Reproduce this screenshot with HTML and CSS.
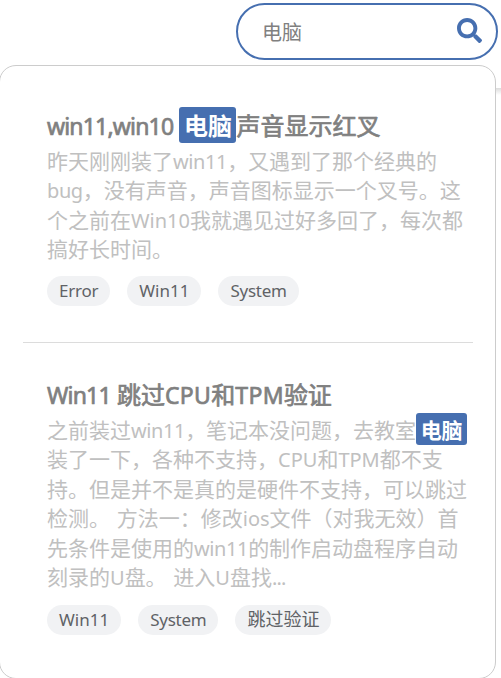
FILE: index.html
```html
<!DOCTYPE html>
<html lang="zh-CN">
<head>
<meta charset="utf-8">
<title>搜索</title>
<link rel="stylesheet" href="styles.css">
</head>
<body>
<header class="search-bar">
  <label class="search">
    <span class="query">电脑</span>
    <svg class="search-icon" viewBox="0 0 512 512" aria-hidden="true"><path fill="currentColor" d="M505 442.700 405.300 343c-4.500-4.500-10.600-7-17-7H372c27.600-35.300 44-79.700 44-128C416 93.100 322.900 0 208 0S0 93.100 0 208s93.100 208 208 208c48.300 0 92.700-16.400 128-44v16.300c0 6.400 2.500 12.500 7 17l99.700 99.700c9.400 9.400 24.600 9.400 33.900 0l28.300-28.300c9.400-9.400 9.400-24.600.1-34zM208 336c-70.700 0-128-57.200-128-128 0-70.700 57.200-128 128-128 70.700 0 128 57.200 128 128 0 70.700-57.200 128-128 128z"/></svg>
  </label>
  <div class="page-edge"></div>
</header>
<main class="results">
  <article class="result">
    <h2><span class="latin">win11,win10 </span><mark>电脑</mark>声音显示红叉</h2>
    <p>昨天刚刚装了<span class="latin tight">win11</span>，又遇到了那个经典的<br><span class="latin tight">bug</span>，没有声音，声音图标显示一个叉号。这<br>个之前在<span class="latin">Win10</span>我就遇见过好多回了，每次都<br>搞好长时间。</p>
    <div class="tags"><span class="narrow">Error</span><span>Win11</span><span class="narrow">System</span></div>
  </article>
  <article class="result">
    <h2><span class="latin">Win11 </span>跳过<span class="latin caps">CPU</span>和<span class="latin caps">TPM</span>验证</h2>
    <p>之前装过<span class="latin tight">win11</span>，笔记本没问题，去教室<mark>电脑</mark><br>装了一下，各种不支持，<span class="latin">CPU</span>和<span class="latin">TPM</span>都不支<br>持。但是并不是真的是硬件不支持，可以跳过<br>检测。 方法一：修改<span class="latin">ios</span>文件（对我无效）首<br>先条件是使用的<span class="latin tight">win11</span>的制作启动盘程序自动<br>刻录的<span class="latin">U</span>盘。 进入<span class="latin">U</span>盘找<span class="latin dots">...</span></p>
    <div class="tags"><span>Win11</span><span class="narrow">System</span><span class="cjk">跳过验证</span></div>
  </article>
</main>
</body>
</html>
```
FILE: styles.css
```css
* { box-sizing: border-box; }
body {
  margin: 0;
  height: 678px;
  overflow: hidden;
  background: #fff;
  color: #808080;
  font-family: "Noto Sans CJK SC", sans-serif;
}
.search-bar {
  position: relative;
  height: 65px;
  padding: 3px 3px 0 0;
  display: flex;
  justify-content: flex-end;
  align-items: flex-start;
}
/* shadow of the page header, visible beside the results panel */
.page-edge {
  position: absolute;
  top: 88px;
  right: 0;
  width: 20px;
  height: 7px;
  background: linear-gradient(#dcdcdc, #fff);
}
.search {
  width: 262px;
  height: 57px;
  padding: 0 14px 0 24px;
  border: 2px solid #466fb0;
  border-radius: 29px;
  display: flex;
  align-items: center;
  justify-content: space-between;
}
.query { font-size: 20px; line-height: 28px; }
.search-icon { width: 25px; height: 25px; margin-top: -2px; color: #466fb0; }
.results {
  position: relative;
  width: 497px;
  height: 614px;
  margin-left: -1px;
  padding: 0 22px 0 23px;
  border: 1px solid #ccc;
  border-radius: 17px;
  background: #fff;
}
.result { padding: 41px 0 0 24px; white-space: nowrap; }
.result:first-child { height: 277px; border-bottom: 1px solid #dcdcdc; }
.result + .result { padding-top: 33px; }
h2 {
  height: 36px;
  margin: 0;
  font-size: 24px;
  line-height: 36px;
  font-weight: 400;
  -webkit-text-stroke: 0.7px currentColor;
}
p {
  margin: 3px 0 0;
  color: #c0c0c0;
  font-size: 21px;
  line-height: 29.4px;
  word-spacing: 2px;
}
.latin { font-family: "Noto Sans", "Open Sans", sans-serif; font-size: 20px; line-height: 1; }
.tight { letter-spacing: -0.4px; }
.dots { letter-spacing: -0.8px; }
h2 .latin { font-size: 23px; white-space: pre; letter-spacing: -0.82px; word-spacing: 1px; }
h2 .latin.caps { letter-spacing: 0.35px; }
mark {
  display: inline-block;
  height: 32px;
  padding: 0 4.500px;
  border-radius: 3px;
  background: #466fb0;
  color: #fff;
  font-weight: 700;
  line-height: 32px;
  margin: -2px 0;
  -webkit-text-stroke: 0;
}
h2 mark { height: 36px; line-height: 36px; margin: 0; }
.tags { display: flex; gap: 17px; margin-top: 12px; }
.result + .result .tags { margin-top: 14px; }
.tags span {
  height: 30px;
  padding: 0 12px;
  border-radius: 15px;
  background: #f1f2f4;
  color: #606266;
  font: 17px/29px "Noto Sans", "Noto Sans CJK SC", sans-serif;
}
.tags .narrow { letter-spacing: -0.25px; }
.tags .cjk { font-size: 18px; }
```
